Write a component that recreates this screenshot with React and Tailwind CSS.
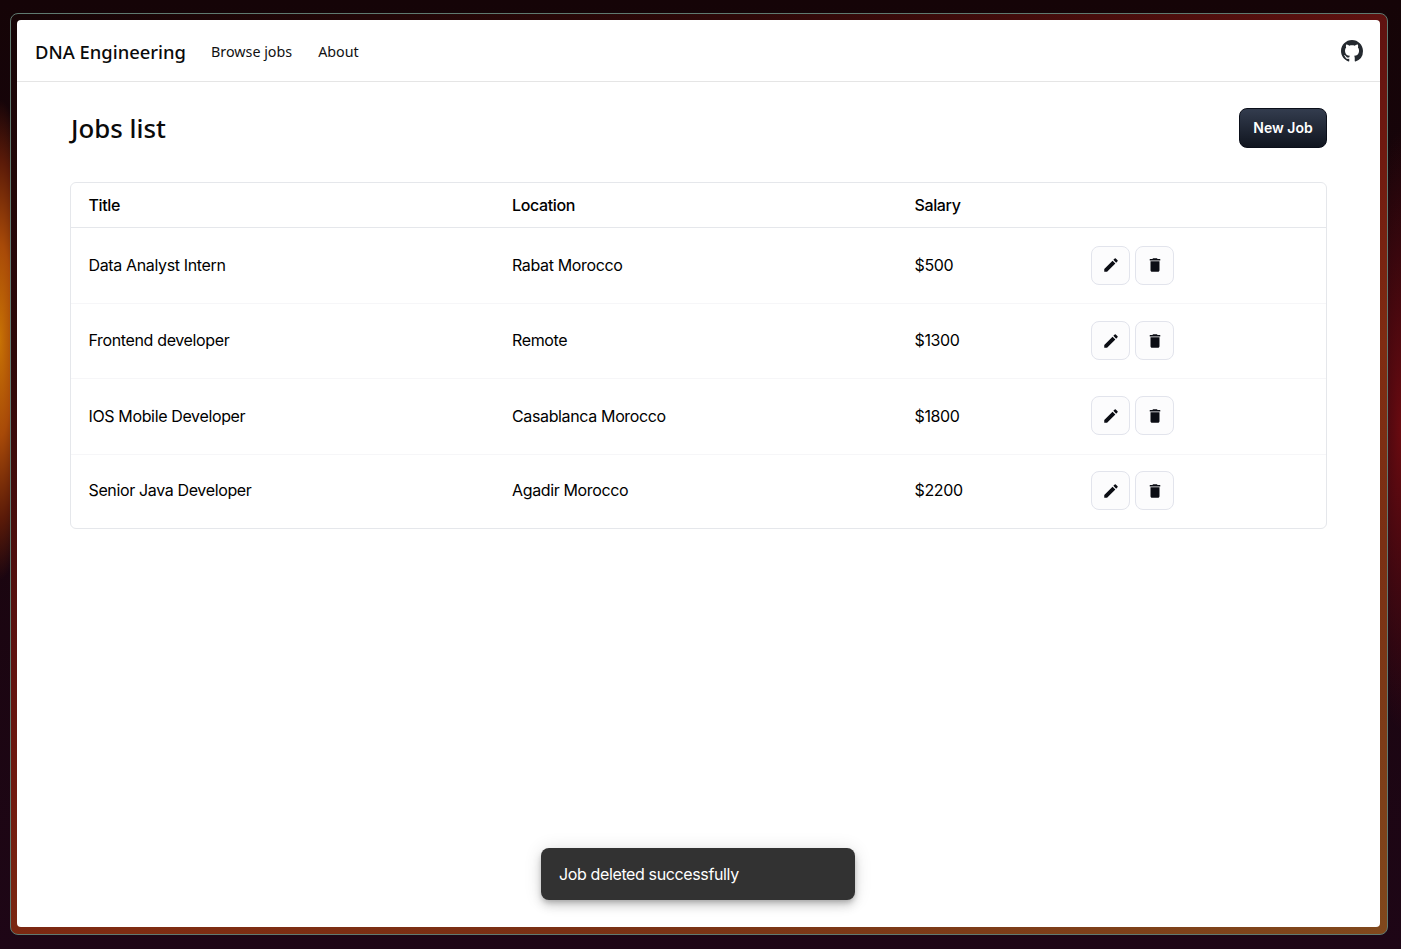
import React from "react";
import { MdEdit, MdDelete } from "react-icons/md";

const jobs = [
  { title: "Data Analyst Intern", location: "Rabat Morocco", salary: "$500", size: "h-[76px] pb-[1px]" },
  { title: "Frontend developer", location: "Remote", salary: "$1300", size: "h-[75px] pb-[1px] [&>span]:-mt-[2px]" },
  { title: "IOS Mobile Developer", location: "Casablanca Morocco", salary: "$1800", size: "h-[76px] pb-[2px]" },
  { title: "Senior Java Developer", location: "Agadir Morocco", salary: "$2200", size: "h-[73px] pb-[2px] [&>span]:-mt-[2px]" },
];

function GithubMark() {
  return (
    <svg viewBox="0 0 16 16" width="22" height="22" fill="#24292f">
      <path d="M8 0C3.58 0 0 3.58 0 8c0 3.54 2.29 6.53 5.47 7.59.4.07.55-.17.55-.38 0-.19-.01-.82-.01-1.49-2.01.37-2.53-.49-2.69-.94-.09-.23-.48-.94-.82-1.13-.28-.15-.68-.52-.01-.53.63-.01 1.08.58 1.23.82.72 1.21 1.87.87 2.33.66.07-.52.28-.87.51-1.07-1.78-.2-3.64-.89-3.64-3.95 0-.87.31-1.59.82-2.15-.08-.2-.36-1.02.08-2.12 0 0 .67-.21 2.2.82.64-.18 1.32-.27 2-.27s1.36.09 2 .27c1.53-1.04 2.2-.82 2.2-.82.44 1.1.16 1.92.08 2.12.51.56.82 1.27.82 2.15 0 3.07-1.87 3.75-3.65 3.95.29.25.54.73.54 1.48 0 1.07-.01 1.93-.01 2.2 0 .21.15.46.55.38A8.01 8.01 0 0 0 16 8c0-4.42-3.58-8-8-8z" />
    </svg>
  );
}

function IconButton({ children }) {
  return (
    <button className="flex h-[39px] w-[39px] items-center justify-center rounded-lg border border-[#e2e4ec] bg-[#fcfcfd] pl-[2px] text-[#0b0d14]">
      {children}
    </button>
  );
}

export default function App() {
  return (
    <div className="h-[949px] w-full overflow-hidden bg-[radial-gradient(ellipse_34px_240px_at_0px_340px,#c87204_0%,#a84a08_40%,#5a1a08_75%,transparent_100%),radial-gradient(ellipse_40px_300px_at_1401px_430px,#6a0a10_0%,transparent_100%),linear-gradient(180deg,#150407_0%,#1e0616_100%)] pl-[10px] pr-[13px] pt-[13px] pb-[14px]">
      <div className="h-full rounded-lg border border-[#5f7a70] bg-[linear-gradient(155deg,#160507_0%,#2e0909_22%,#5e1210_41%,#701a10_50%,#7f2c12_62%,#7a3014_75%,#80481c_100%)] pt-[6px] pl-[6px] pr-[7px] pb-[7px]">
        <div className="relative flex h-full flex-col overflow-hidden rounded-sm bg-white font-['Inter',sans-serif] text-black">
          <header className="flex h-[62px] shrink-0 items-center justify-between border-b border-[#e5e5e5] pl-[18px] pr-[17px] font-['Noto_Sans',sans-serif]">
            <nav className="mt-[2px] flex items-center">
              <span className="text-[18.4px] font-medium text-[#0a0a0a]">DNA Engineering</span>
              <a className="ml-[25px] text-[14.3px] text-[#111]">Browse jobs</a>
              <a className="ml-[26px] text-[14.3px] text-[#111]">About</a>
            </nav>
            <GithubMark />
          </header>

          <main className="px-[53px]">
            <div className="flex h-[100px] items-center justify-between">
              <h1 className="-mt-[8px] ml-[1px] font-['Noto_Sans',sans-serif] text-[25.8px] font-medium text-[#0a0a0a]">Jobs list</h1>
              <button className="-mt-[8px] h-10 w-[88px] rounded-lg border border-[#0b0f1a] bg-[linear-gradient(180deg,#333c4e_0%,#10151f_100%)] text-sm font-semibold text-white">
                New Job
              </button>
            </div>

            <div className="overflow-hidden rounded-md border border-[#e5e7eb] tracking-[-0.36px]">
              <div className="grid h-[45px] grid-cols-[423.5px_402.5px_176px_1fr] items-center border-b border-[#e5e7eb] pl-[17.5px] text-base font-medium">
                <span>Title</span>
                <span>Location</span>
                <span>Salary</span>
              </div>
              {jobs.map((job, i) => (
                <div
                  key={job.title}
                  className={`grid grid-cols-[423.5px_402.5px_176px_1fr] items-center pl-[17.5px] text-base ${job.size} ${i < 3 ? "border-b border-[#f6f6f8]" : ""}`}
                >
                  <span>{job.title}</span>
                  <span>{job.location}</span>
                  <span>{job.salary}</span>
                  <div className="flex gap-[5px]">
                    <IconButton>
                      <MdEdit size={18} />
                    </IconButton>
                    <IconButton>
                      <MdDelete size={18} />
                    </IconButton>
                  </div>
                </div>
              ))}
            </div>
          </main>

          <div className="absolute left-[524px] top-[828px] flex h-[52px] w-[314px] items-center rounded-lg bg-[#323232] px-[18px] text-base tracking-[-0.37px] text-white shadow-[0_3px_5px_-1px_rgba(0,0,0,0.2),0_6px_10px_0_rgba(0,0,0,0.14),0_1px_18px_0_rgba(0,0,0,0.12)]">
            Job deleted successfully
          </div>
        </div>
      </div>
    </div>
  );
}
